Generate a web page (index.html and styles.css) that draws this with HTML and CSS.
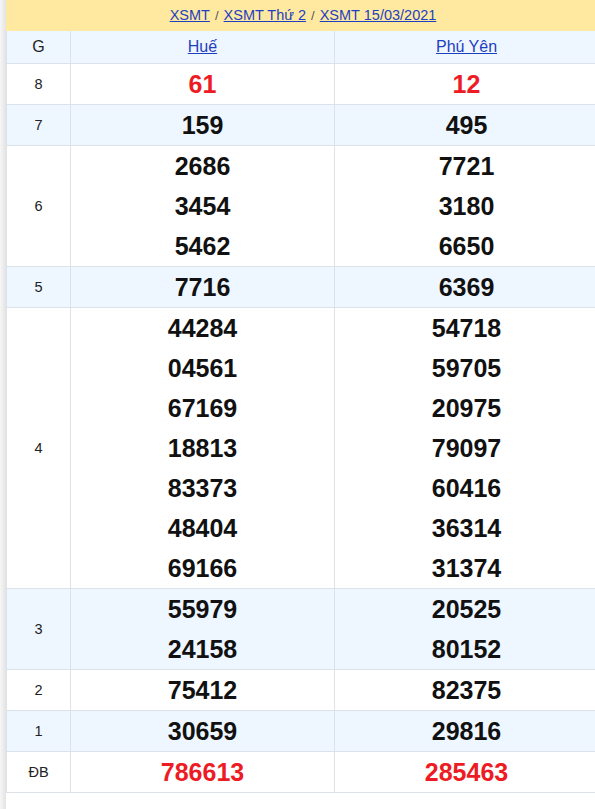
FILE: index.html
```html
<!DOCTYPE html>
<html lang="vi">
<head>
<meta charset="utf-8">
<title>XSMT 15/03/2021</title>
<link rel="stylesheet" href="styles.css">
</head>
<body>
<div class="page">
  <div class="crumbs">
    <a href="#">XSMT</a><span class="sep">/</span><a href="#">XSMT Thứ 2</a><span class="sep">/</span><a href="#">XSMT 15/03/2021</a>
  </div>
  <table class="kq">
    <colgroup><col class="c-g"><col class="c-p"><col class="c-p"></colgroup>
    <thead>
      <tr class="alt head"><td class="lbl">G</td><td><a href="#">Huế</a></td><td><a href="#">Phú Yên</a></td></tr>
    </thead>
    <tbody>
      <tr><td class="lbl">8</td><td class="num red">61</td><td class="num red">12</td></tr>
      <tr class="alt"><td class="lbl">7</td><td class="num">159</td><td class="num">495</td></tr>
      <tr><td class="lbl">6</td><td class="num"><div>2686</div><div>3454</div><div>5462</div></td><td class="num"><div>7721</div><div>3180</div><div>6650</div></td></tr>
      <tr class="alt"><td class="lbl">5</td><td class="num">7716</td><td class="num">6369</td></tr>
      <tr><td class="lbl">4</td><td class="num"><div>44284</div><div>04561</div><div>67169</div><div>18813</div><div>83373</div><div>48404</div><div>69166</div></td><td class="num"><div>54718</div><div>59705</div><div>20975</div><div>79097</div><div>60416</div><div>36314</div><div>31374</div></td></tr>
      <tr class="alt"><td class="lbl">3</td><td class="num"><div>55979</div><div>24158</div></td><td class="num"><div>20525</div><div>80152</div></td></tr>
      <tr><td class="lbl">2</td><td class="num">75412</td><td class="num">82375</td></tr>
      <tr class="alt"><td class="lbl">1</td><td class="num">30659</td><td class="num">29816</td></tr>
      <tr><td class="lbl">ĐB</td><td class="num red">786613</td><td class="num red">285463</td></tr>
    </tbody>
  </table>
</div>
</body>
</html>
```

FILE: styles.css
```css
html, body {
  margin: 0;
  padding: 0;
}
body {
  background: #fff linear-gradient(to right, #f6f6f6, #e3e3e3) 0 0 / 6px 100% no-repeat;
  font-family: "Liberation Sans", Arial, sans-serif;
  color: #222;
  min-height: 809px;
  overflow: hidden;
}
.page {
  margin-left: 6px;
  width: 593px;
}
.crumbs {
  height: 31px;
  line-height: 31px;
  background: #ffe9a1;
  text-align: center;
  font-size: 14.5px;
  padding-left: 1px;
}
.crumbs a, .kq a {
  color: #1d3fc0;
  text-decoration: underline;
}
.crumbs .sep {
  color: #555;
  margin: 0 5px;
  font-size: 13px;
}
.kq {
  width: 593px;
  border-collapse: collapse;
  table-layout: fixed;
}
.c-g { width: 64px; }
.c-p { width: 264px; }
.kq td {
  border-bottom: 1px solid #dde2e8;
  border-right: 1px solid #dde2e8;
  text-align: center;
  vertical-align: middle;
  padding: 0;
}
.kq td.lbl {
  border-left: 1px solid #dde2e8;
  font-size: 14.5px;
  color: #222;
}
.kq tr.head td {
  height: 32px;
  font-size: 16px;
}
.kq tr.alt td {
  background: #eef6ff;
}
.kq td.num {
  font-size: 25px;
  font-weight: bold;
  color: #111;
  line-height: 40px;
  height: 40px;
}
.kq td.num.red {
  color: #ed1c24;
}
```
